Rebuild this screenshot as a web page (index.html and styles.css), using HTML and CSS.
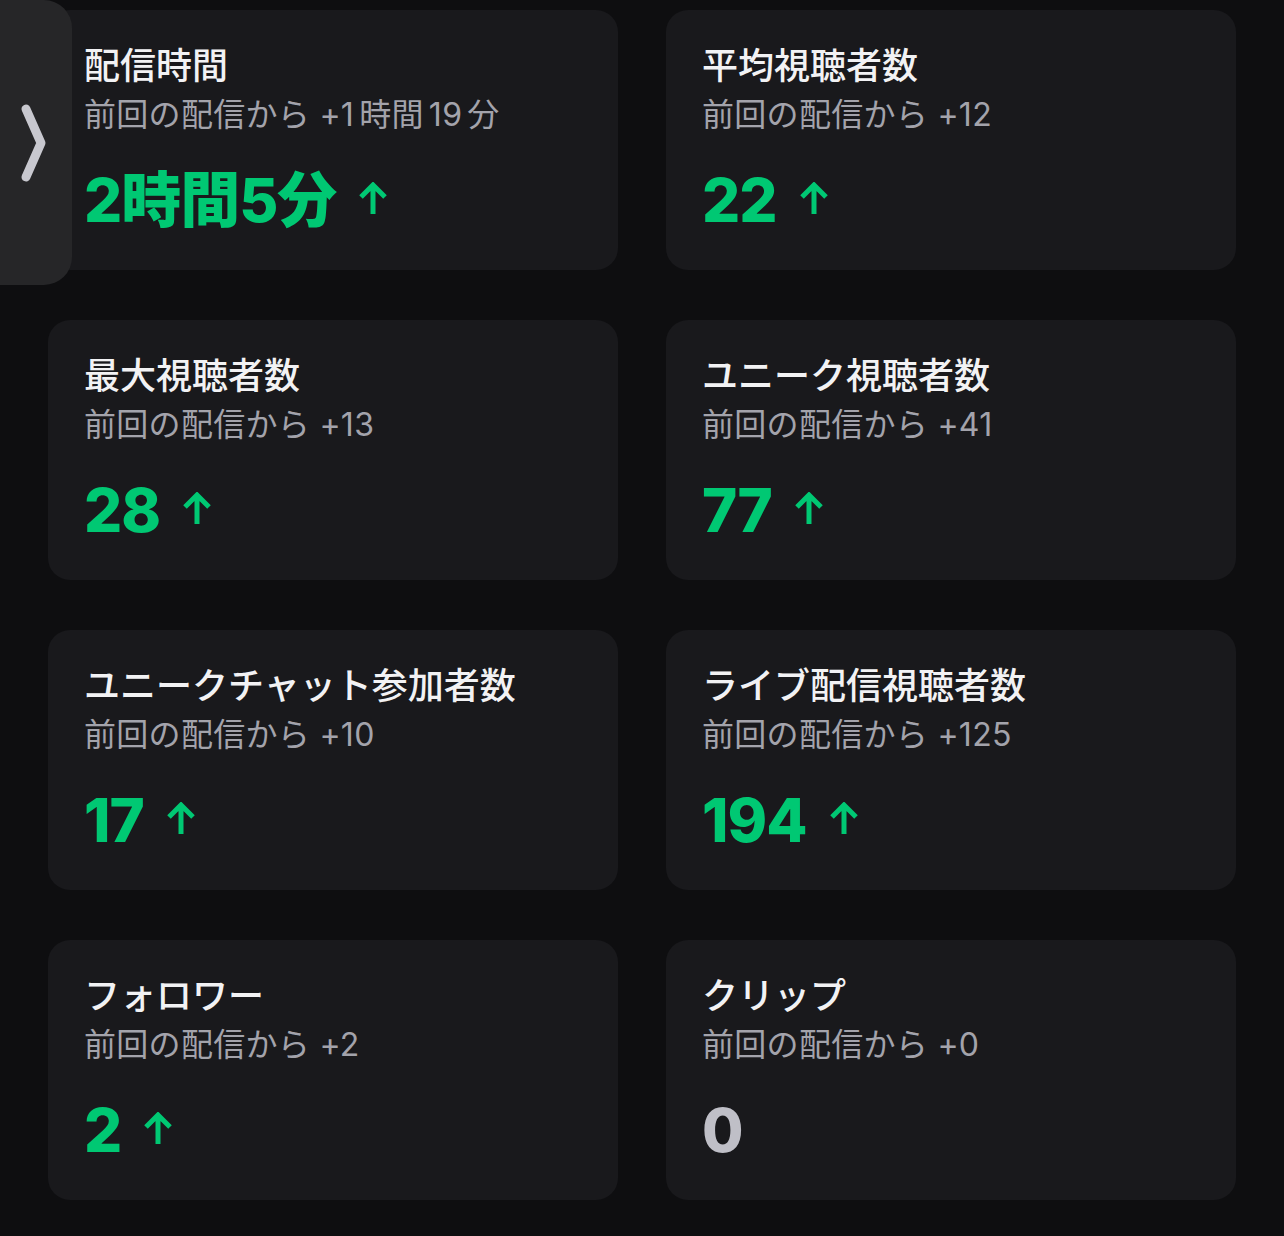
FILE: index.html
```html
<!DOCTYPE html>
<html lang="ja">
<head>
    <meta charset="UTF-8">
    <meta name="viewport" content="width=device-width, initial-scale=1.0">
    <title>配信の統計</title>
    <link rel="stylesheet" href="styles.css">
</head>
<body>
    <div class="side-tab">
        <svg width="30" height="80" viewBox="0 0 30 80">
            <path d="M8 6 L23 40 L8 74" fill="none" stroke="#c8c8cf" stroke-width="9" stroke-linecap="round" stroke-linejoin="round"/>
        </svg>
    </div>

    <div class="stats-grid">
        <div class="stat-card">
            <p class="stat-title">配信時間</p>
            <p class="stat-diff">前回の配信から +1<span class="gap">時間</span>19<span class="gap">分</span></p>
            <p class="stat-value up">2時間5分 <svg class="arrow" viewBox="0 0 30 34"><path d="M15 32 V4 M3 15 L15 3 L27 15" fill="none" stroke="currentColor" stroke-width="5"/></svg></p>
        </div>
        <div class="stat-card">
            <p class="stat-title">平均視聴者数</p>
            <p class="stat-diff">前回の配信から +12</p>
            <p class="stat-value up">22 <svg class="arrow" viewBox="0 0 30 34"><path d="M15 32 V4 M3 15 L15 3 L27 15" fill="none" stroke="currentColor" stroke-width="5"/></svg></p>
        </div>
        <div class="stat-card">
            <p class="stat-title">最大視聴者数</p>
            <p class="stat-diff">前回の配信から +13</p>
            <p class="stat-value up">28 <svg class="arrow" viewBox="0 0 30 34"><path d="M15 32 V4 M3 15 L15 3 L27 15" fill="none" stroke="currentColor" stroke-width="5"/></svg></p>
        </div>
        <div class="stat-card">
            <p class="stat-title">ユニーク視聴者数</p>
            <p class="stat-diff">前回の配信から +41</p>
            <p class="stat-value up">77 <svg class="arrow" viewBox="0 0 30 34"><path d="M15 32 V4 M3 15 L15 3 L27 15" fill="none" stroke="currentColor" stroke-width="5"/></svg></p>
        </div>
        <div class="stat-card">
            <p class="stat-title">ユニークチャット参加者数</p>
            <p class="stat-diff">前回の配信から +10</p>
            <p class="stat-value up">17 <svg class="arrow" viewBox="0 0 30 34"><path d="M15 32 V4 M3 15 L15 3 L27 15" fill="none" stroke="currentColor" stroke-width="5"/></svg></p>
        </div>
        <div class="stat-card">
            <p class="stat-title">ライブ配信視聴者数</p>
            <p class="stat-diff">前回の配信から +125</p>
            <p class="stat-value up">194 <svg class="arrow" viewBox="0 0 30 34"><path d="M15 32 V4 M3 15 L15 3 L27 15" fill="none" stroke="currentColor" stroke-width="5"/></svg></p>
        </div>
        <div class="stat-card">
            <p class="stat-title">フォロワー</p>
            <p class="stat-diff">前回の配信から +2</p>
            <p class="stat-value up">2 <svg class="arrow" viewBox="0 0 30 34"><path d="M15 32 V4 M3 15 L15 3 L27 15" fill="none" stroke="currentColor" stroke-width="5"/></svg></p>
        </div>
        <div class="stat-card">
            <p class="stat-title">クリップ</p>
            <p class="stat-diff">前回の配信から +0</p>
            <p class="stat-value">0</p>
        </div>
    </div>
</body>
</html>
```

FILE: styles.css
```css
body {
    margin: 0;
    padding: 0;
    background-color: #0e0e10;
    font-family: Inter, "Noto Sans CJK JP", sans-serif;
    color: #efeff1;
}

p { margin: 0; }

.side-tab {
    position: absolute;
    left: 0;
    top: 0;
    width: 72px;
    height: 285px;
    background-color: #262628;
    border-radius: 0 28px 28px 0;
    display: flex;
    align-items: center;
    padding-left: 18px;
    box-sizing: border-box;
}

.stats-grid {
    display: grid;
    grid-template-columns: 570px 570px;
    grid-auto-rows: 260px;
    column-gap: 48px;
    row-gap: 50px;
    padding: 10px 0 0 48px;
}

.stat-card {
    background-color: #19191c;
    border-radius: 22px;
    padding: 44px 36px 0 36px;
    box-sizing: border-box;
}

.stat-title {
    font-size: 36px;
    line-height: 44px;
    font-weight: 500;
    margin-top: -10px;
    color: #f2f2f4;
}

.stat-diff {
    font-size: 32px;
    line-height: 44px;
    margin-top: 5px;
    color: #a3a3ab;
    letter-spacing: 0.3px;
}

.stat-diff .gap { margin: 0 5px; }

.stat-value {
    display: flex;
    align-items: center;
    gap: 22px;
    font-size: 60px;
    line-height: 70px;
    font-weight: 800;
    margin-top: 28px;
    color: #bfbfc7;
    letter-spacing: -1px;
}

.stat-value.up { color: #00c873; }

.arrow {
    width: 30px;
    height: 34px;
    margin-top: -2px;
}
```
